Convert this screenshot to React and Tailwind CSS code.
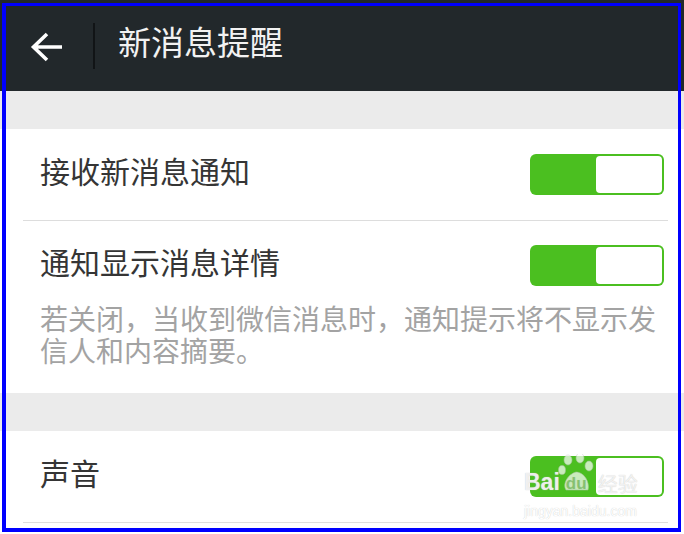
import React from "react";

function Toggle() {
  return (
    <div className="flex h-[41px] w-[134px] justify-end rounded-[6px] bg-[#4bbf20] p-[2px]">
      <div className="h-full w-[66px] rounded-[4px] bg-white" />
    </div>
  );
}

function Divider() {
  return <div className="ml-[23px] mr-[16px] h-px bg-[#dddddd]" />;
}

function Band() {
  return <div className="h-[38px] bg-[#ebebeb]" />;
}

function Label({ children }) {
  return <span className="mb-[10px] text-[30px] leading-none text-[#353535]">{children}</span>;
}

function Watermark() {
  return (
    <div className="pointer-events-none absolute left-[524px] top-[454px] text-white/75 [text-shadow:0_0_1px_#c0c0c0]">
      <div className="flex items-end">
        <span className="font-['Liberation_Sans'] text-[23px] font-bold leading-none">Bai</span>
        <div className="relative ml-[-2px] h-[40px] w-[38px]">
          <svg viewBox="0 0 38 40" className="absolute inset-0 h-full w-full opacity-70">
            <g fill="#ffffff" stroke="#c4c4c4" strokeWidth="0.6">
              <ellipse cx="10" cy="6" rx="4" ry="5" />
              <ellipse cx="22" cy="4" rx="4" ry="5" />
              <ellipse cx="31" cy="12" rx="4" ry="5" />
              <ellipse cx="4" cy="16" rx="3.5" ry="4.5" />
              <path d="M8 36 C4 30 10 20 18 18 C26 18 32 28 30 36 Z" />
            </g>
          </svg>
          <span className="absolute bottom-[2px] left-[8px] font-['Liberation_Sans'] text-[17px] font-bold leading-none text-[#4bbf20]/50">du</span>
        </div>
        <span className="ml-[2px] font-['Noto_Sans_CJK_SC',sans-serif] text-[20px] leading-none">经验</span>
      </div>
      <div className="mt-[10px] font-['Liberation_Sans'] text-[14px] leading-none text-white">jingyan.baidu.com</div>
    </div>
  );
}

export default function App() {
  return (
    <div className="relative h-[534px] w-[684px] overflow-hidden bg-white font-['Noto_Sans_CJK_SC',sans-serif]">
      <header className="flex h-[91px] items-center bg-[#22282b]">
        <svg width="34" height="32" viewBox="0 0 34 32" className="ml-[30px] mt-[2px]">
          <path d="M32 16 H4 M17 3 L3.5 16 L17 29" fill="none" stroke="#ffffff" strokeWidth="3.6" />
        </svg>
        <div className="ml-[29px] h-[46px] w-[2px] bg-[#111416]" />
        <h1 className="mb-[8px] ml-[23px] text-[33px] font-normal leading-none text-[#f2f2f2]">新消息提醒</h1>
      </header>

      <Band />

      <div className="flex h-[91px] items-center justify-between pl-[40px] pr-[20px]">
        <Label>接收新消息通知</Label>
        <Toggle />
      </div>
      <Divider />

      <div className="pb-[27px] pt-[24px]">
        <div className="flex items-center justify-between pl-[40px] pr-[20px]">
          <Label>通知显示消息详情</Label>
          <Toggle />
        </div>
        <p className="mt-[16px] pl-[40px] pr-[20px] text-[28px] leading-[32px] text-[#a3a3a3]">
          若关闭，当收到微信消息时，通知提示将不显示发信人和内容摘要。
        </p>
      </div>

      <Band />

      <div className="flex h-[91px] items-center justify-between pl-[40px] pr-[20px]">
        <Label>声音</Label>
        <Toggle />
      </div>
      <Divider />

      <Watermark />

      <div className="pointer-events-none absolute left-[2px] top-[3px] h-[529px] w-[679px] border-b-4 border-l-4 border-r-[3px] border-t-[3px] border-[#0000ff]" />
    </div>
  );
}
